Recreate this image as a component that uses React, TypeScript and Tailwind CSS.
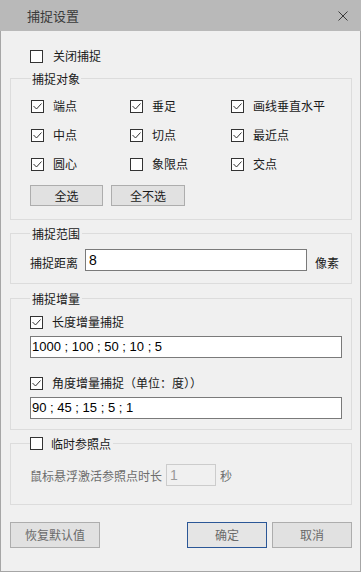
import React from "react";

const FONT = '"Noto Sans CJK SC", "Noto Sans", sans-serif';
const NUMFONT = '"Liberation Sans", "Noto Sans CJK SC", sans-serif';

function Box({ checked }: { checked?: boolean }) {
  return (
    <span className="inline-flex w-[13px] h-[13px] border border-[#333333] bg-white items-center justify-center shrink-0">
      {checked && (
        <svg width="11" height="11" viewBox="0 0 11 11">
          <path d="M1.5 5 L4.5 8 L9.5 2.5" stroke="#333333" strokeWidth="1" fill="none" />
        </svg>
      )}
    </span>
  );
}

function Check({ label, checked, gap = "gap-[9px]" }: { label: string; checked?: boolean; gap?: string }) {
  return (
    <div className={`flex items-center ${gap} h-[16px] leading-[16px]`}>
      <Box checked={checked} />
      <span className="whitespace-nowrap">{label}</span>
    </div>
  );
}

export default function App() {
  const items: [string, boolean][] = [
    ["端点", true],
    ["垂足", true],
    ["画线垂直水平", true],
    ["中点", true],
    ["切点", true],
    ["最近点", true],
    ["圆心", true],
    ["象限点", false],
    ["交点", true],
  ];
  return (
    <div
      className="w-[361px] h-[572px] flex flex-col text-[12px] text-[#1a1a1a] bg-[#f0f0f0]"
      style={{ fontFamily: FONT }}
    >
      <div className="h-[31px] shrink-0 bg-[#b9b9b9] flex items-center justify-between pl-[27px] pr-[13px]">
        <span className="text-[13px] text-[#3a3a3a] leading-[16px]">捕捉设置</span>
        <svg width="10" height="10" viewBox="0 0 10 10">
          <path d="M0.5 0.5 L9.5 9.5 M9.5 0.5 L0.5 9.5" stroke="#3a3a3a" strokeWidth="1" />
        </svg>
      </div>
      <div className="flex-1 flex flex-col border-x border-b border-[#a6a6a6] pl-[9px] pr-[8px] pt-[17px]">
        <div className="ml-[20px]">
          <Check label="关闭捕捉" gap="gap-[10px]" />
        </div>

        <fieldset className="mt-[6px] border border-[#dcdcdc] pl-[20px] pr-[9px] pt-[11px] pb-[13px] min-w-0">
          <legend className="px-[1px] leading-[17px]">捕捉对象</legend>
          <div className="grid grid-cols-[99px_101px_1fr] gap-y-[13px]">
            {items.map(([l, c]) => (
              <Check key={l} label={l} checked={c} />
            ))}
          </div>
          <div className="flex gap-[8px] mt-[13px] -ml-[1px]">
            <button className="w-[73px] h-[21px] bg-[#e1e1e1] border border-[#adadad] leading-[19px]">全选</button>
            <button className="w-[74px] h-[21px] bg-[#e1e1e1] border border-[#adadad] leading-[19px]">全不选</button>
          </div>
        </fieldset>

        <fieldset className="mt-[5px] border border-[#dcdcdc] pl-[19px] pr-[9px] pt-[7px] pb-[12px] min-w-0">
          <legend className="px-[2px] leading-[17px]">捕捉范围</legend>
          <div className="flex items-center">
            <span className="pt-[5px] leading-[16px]">捕捉距离</span>
            <div
              className="ml-[7px] w-[222px] h-[22px] border border-[#7a7a7a] bg-white pl-[3px] flex items-center text-[14px] text-black"
              style={{ fontFamily: NUMFONT }}
            >
              8
            </div>
            <span className="ml-[8px] pt-[5px] leading-[16px]">像素</span>
          </div>
        </fieldset>

        <fieldset className="mt-[6px] border border-[#dcdcdc] pl-[19px] pr-[9px] pt-[7px] pb-[10px] min-w-0">
          <legend className="px-[2px] leading-[17px]">捕捉增量</legend>
          <Check label="长度增量捕捉" checked />
          <div
            className="mt-[6px] w-full h-[22px] border border-[#7a7a7a] bg-white pl-[1px] flex items-center text-[13px] text-black"
            style={{ fontFamily: NUMFONT }}
          >
            1000 ; 100 ; 50 ; 10 ; 5
          </div>
          <div className="mt-[17px]">
            <Check label="角度增量捕捉（单位：度））" checked />
          </div>
          <div
            className="mt-[6px] w-full h-[22px] border border-[#7a7a7a] bg-white pl-[1px] flex items-center text-[13px] text-black"
            style={{ fontFamily: NUMFONT }}
          >
            90 ; 45 ; 15 ; 5 ; 1
          </div>
        </fieldset>

        <fieldset className="mt-[5px] border border-[#dcdcdc] pl-[19px] pr-[9px] pt-[12px] pb-[18px] min-w-0">
          <legend className="pr-[2px] leading-[17px]">
            <div className="flex items-center gap-[8px] h-[17px]">
              <Box />
              <span>临时参照点</span>
            </div>
          </legend>
          <div className="flex items-center text-[#6d6d6d]">
            <span className="pt-[2px] leading-[16px]">鼠标悬浮激活参照点时长</span>
            <div
              className="ml-[4px] w-[50px] h-[22px] border border-[#cccccc] bg-[#f0f0f0] pl-[3px] flex items-center text-[14px] text-[#9a9a9a]"
              style={{ fontFamily: NUMFONT }}
            >
              1
            </div>
            <span className="ml-[4px] pt-[2px] leading-[16px]">秒</span>
          </div>
        </fieldset>

        <div className="mt-[17px] flex justify-between text-[#6a6a6a]">
          <button className="w-[90px] h-[26px] bg-[#e1e1e1] border border-[#adadad] leading-[24px]">恢复默认值</button>
          <div className="flex gap-[5px]">
            <button className="w-[80px] h-[26px] bg-[#e5e5e5] border border-[#2b5797] leading-[24px]">确定</button>
            <button className="w-[80px] h-[26px] bg-[#e1e1e1] border border-[#adadad] leading-[24px]">取消</button>
          </div>
        </div>
      </div>
    </div>
  );
}
